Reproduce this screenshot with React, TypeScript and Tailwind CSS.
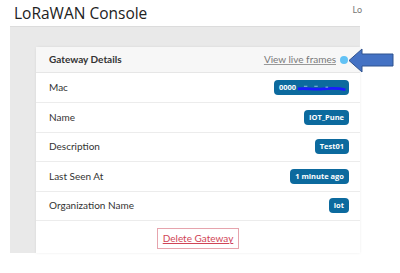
import React from "react";

const rows: { label: string; value: string }[] = [
  { label: "Name", value: "IOT_Pune" },
  { label: "Description", value: "Test01" },
  { label: "Last Seen At", value: "1 minute ago" },
  { label: "Organization Name", value: "iot" },
];

function Badge({ children }: { children: React.ReactNode }) {
  return (
    <span className="flex h-[15px] items-center rounded-[4px] bg-[#0c6a9e] px-[5px] font-['Open_Sans',sans-serif] text-[7.5px] font-bold leading-none text-white">
      {children}
    </span>
  );
}

export default function App() {
  return (
    <div className="relative h-[273px] w-[400px] overflow-hidden bg-white font-['Lato','Open_Sans',sans-serif]">
      <div className="flex h-[26px] items-start justify-between pl-[14px] pr-[38px]">
        <div className="mt-[3px] font-['Open_Sans',sans-serif] text-[15.5px] leading-[20px] text-[#222]">
          LoRaWAN Console
        </div>
        <div className="mt-[4px] text-[9px] leading-[12px] text-[#777]">Lo</div>
      </div>
      <div className="ml-[10px] h-[227px] w-[350px] border-t border-[#dcdcdc] bg-[#e9e9e9] pl-[26px] pt-[20px]">
        <div className="h-[206px] w-[324px] rounded-tl-[3px] bg-white shadow-[0_0_3px_rgba(0,0,0,0.08)]">
          <div className="flex h-[26px] items-center justify-between border-b border-[#e6e6e6] bg-[#f7f7f7] pl-[13px] pr-[12px]">
            <span className="text-[10px] font-bold text-[#333]">Gateway Details</span>
            <span className="flex items-center gap-[4px]">
              <span className="text-[10px] text-[#777] underline decoration-[#999]">View live frames</span>
              <span className="h-[8px] w-[8px] rounded-full bg-[#62c2f5]" />
            </span>
          </div>
          <div className="flex h-[30px] items-center justify-between border-b border-[#ececec] pl-[13px] pr-[11px]">
            <span className="text-[10px] text-[#333]">Mac</span>
            <span className="flex h-[15px] w-[75px] items-center rounded-[4px] bg-[#0c6a9e] pl-[5px] font-['Open_Sans',sans-serif] text-[7.5px] font-bold leading-none text-white">
              0000
              <svg width="60" height="10" viewBox="0 0 60 10" className="ml-[1px]">
                <path d="M1 6 C10 5, 20 7, 30 6 S 48 5, 56 7" stroke="#1a1aff" strokeWidth="3" fill="none" />
                <path d="M8 3 L12 3 M20 3 L24 3 M33 4 L36 4" stroke="#9fc6e6" strokeWidth="1" />
              </svg>
            </span>
          </div>
          {rows.map((r) => (
            <div
              key={r.label}
              className="flex h-[29.5px] items-center justify-between border-b border-[#ececec] pl-[13px] pr-[11px]"
            >
              <span className="text-[10px] text-[#333]">{r.label}</span>
              <Badge>{r.value}</Badge>
            </div>
          ))}
          <div className="flex justify-center pt-[7px]">
            <span className="flex h-[21px] w-[82px] items-center justify-center border border-[#e6a4ad] text-[10px] text-[#d04456] underline">
              Delete Gateway
            </span>
          </div>
        </div>
      </div>
      <svg className="absolute left-[348px] top-[48px]" width="47" height="25" viewBox="0 0 47 25">
        <path
          d="M1 12.5 L14 1 L14 6 L45 6 L45 18 L14 18 L14 24 Z"
          fill="#4472c4"
          stroke="#2f528f"
          strokeWidth="1"
        />
      </svg>
    </div>
  );
}
